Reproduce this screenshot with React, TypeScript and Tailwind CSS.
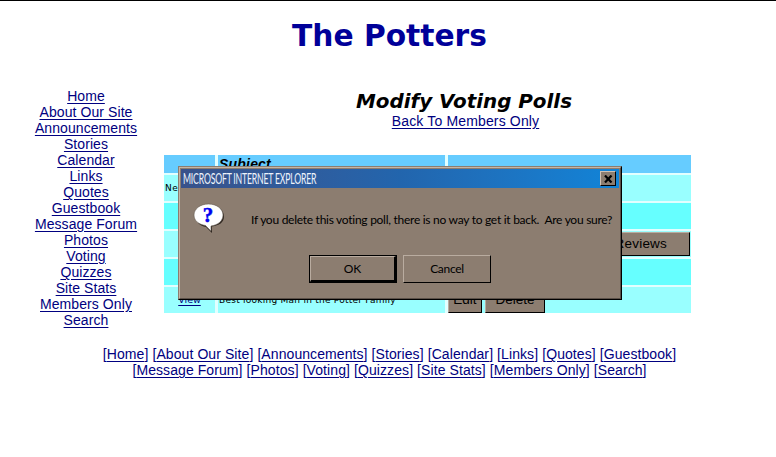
import React from "react";

const links = [
  "Home",
  "About Our Site",
  "Announcements",
  "Stories",
  "Calendar",
  "Links",
  "Quotes",
  "Guestbook",
  "Message Forum",
  "Photos",
  "Voting",
  "Quizzes",
  "Site Stats",
  "Members Only",
  "Search",
];

const pageFont = "font-['Liberation_Sans',Arial,sans-serif] text-[14px] leading-[16px]";
const grayButton =
  "border border-t-[#b9aca0] border-l-[#b9aca0] border-r-black border-b-black bg-[#8c7d70] text-black";

function PageLink({ label }: { label: string }) {
  return (
    <a href="#" className="text-[#000080] underline underline-offset-2">
      {label}
    </a>
  );
}

function FooterRow({ items }: { items: string[] }) {
  return (
    <div className="flex justify-center gap-[4px]">
      {items.map((label) => (
        <span key={label} className="whitespace-nowrap">
          [<PageLink label={label} />]
        </span>
      ))}
    </div>
  );
}

function PollTable() {
  return (
    <div className="grid w-[527px] grid-cols-[51px_227px_243px] grid-rows-[18px_26px_26px_26px_26px_26px] gap-x-[3px] gap-y-[2px] bg-[#e2ffff] text-black">
      <div className="bg-[#66ccff]" />
      <div className="overflow-hidden bg-[#66ccff] pl-px text-[14px] leading-[18px] font-bold tracking-[0.2px] italic">Subject</div>
      <div className="bg-[#66ccff]" />

      <div className="bg-[#99ffff] pl-px font-['DejaVu_Sans',sans-serif] text-[9px] leading-[26px] tracking-[0.5px]">New</div>
      <div className="bg-[#99ffff]" />
      <div className="bg-[#99ffff]" />

      <div className="bg-[#66ffff]" />
      <div className="bg-[#66ffff]" />
      <div className="bg-[#66ffff]" />

      <div className="bg-[#99ffff]" />
      <div className="bg-[#99ffff]" />
      <div className="flex items-center justify-end bg-[#99ffff] pr-px">
        <button className={`${grayButton} h-[24px] w-[105px] pr-[22px] text-right text-[13.5px] tracking-[0.2px]`}>Reviews</button>
      </div>

      <div className="bg-[#66ffff]" />
      <div className="bg-[#66ffff]" />
      <div className="bg-[#66ffff]" />

      <div className="bg-[#99ffff] text-center font-['DejaVu_Sans',sans-serif] text-[9.5px] leading-[26px]">
        <PageLink label="View" />
      </div>
      <div className="bg-[#99ffff] pl-px font-['DejaVu_Sans',sans-serif] text-[9px] leading-[26px] tracking-[0.25px] whitespace-nowrap">
        Best looking Man in the Potter Family
      </div>
      <div className="flex items-center gap-[3px] bg-[#99ffff]">
        <button className={`${grayButton} h-[25px] w-[34px] text-[13.5px]`}>Edit</button>
        <button className={`${grayButton} h-[25px] w-[60px] text-[13.5px]`}>Delete</button>
      </div>
    </div>
  );
}

function ConfirmDialog() {
  return (
    <div className="absolute top-[165px] left-[178px] flex h-[134px] w-[444px] flex-col border border-t-[#8c7d70] border-r-black border-b-black border-l-[#8c7d70] bg-[#8c7d70] font-[Lato,sans-serif] text-black">
      <div className="flex grow flex-col border border-t-[#c4b5a6] border-r-[#5b5048] border-b-[#5b5048] border-l-[#c4b5a6] px-px pt-px">
        <div className="flex h-[19px] items-center justify-between bg-linear-to-r from-[#38528a] via-[#2265ad] to-[#1084d8] pr-[3px] pl-[2px]">
          <span className="w-[133px] origin-left scale-x-[0.58] text-[15px] leading-[19px] tracking-[-0.35px] whitespace-nowrap text-[#edf3fc]">
            MICROSOFT INTERNET EXPLORER
          </span>
          <button aria-label="Close" className="flex h-[15px] w-[16px] items-center justify-center border border-t-[#d0c2b5] border-r-black border-b-black border-l-[#d0c2b5] bg-[#8c7d70]">
            <svg width="9" height="8" viewBox="0 0 9 8">
              <path d="M1 .5l6.500 7M7.500 .5L1 7.500" fill="none" stroke="#000" strokeWidth="2.200" />
            </svg>
          </button>
        </div>
        <div className="flex h-[67px] pt-[14px] pl-[12px]">
          <svg width="32" height="34" viewBox="0 0 32 34" className="shrink-0">
            <path d="M16 3C25 3 31 8 31 14.500c0 6-5 9-12 10V31l-6-6C7 24 3 20 3 14.500 3 8 8 3 16 3z" fill="#302821" />
            <path d="M15.500 2C24 2 30 7 30 13c0 6-5 10-12 11v5l-5.500-5.500C6 22.500 1 19 1 13 1 7 7 2 15.500 2z" fill="#fff" stroke="#655a50" strokeWidth=".6" />
            <text x="15" y="20" textAnchor="middle" fontFamily="Liberation Serif, serif" fontWeight="bold" fontSize="21" fill="#0000ef" stroke="#0000ef" strokeWidth=".5">?</text>
          </svg>
          <p className="ml-[26px] pt-[10px] text-[12px] leading-[16px] tracking-[-0.27px] whitespace-pre">
            If you delete this voting poll, there is no way to get it back.{"  "}Are you sure?
          </p>
        </div>
        <div className="flex gap-[6px] pl-[128px]">
          <div className="border border-black">
            <button className={`${grayButton} h-[26px] w-[86px] border-r-2 border-b-2 text-[12px]`}>OK</button>
          </div>
          <button className={`${grayButton} h-[28px] w-[88px] text-[12px] tracking-[-0.3px]`}>Cancel</button>
        </div>
      </div>
    </div>
  );
}

export default function App() {
  return (
    <div className={`relative h-[457px] w-[776px] overflow-hidden border-t border-black bg-white ${pageFont}`}>
      <h1 className="h-[87px] pt-[15px] pl-[3px] text-center font-['DejaVu_Sans',sans-serif] text-[29.7px] leading-[40px] font-bold text-[#000099]">
        The Potters
      </h1>
      <div className="flex h-[258px]">
        <nav className="flex w-[164px] flex-col items-center pl-[8px] tracking-[0.08px]">
          {links.map((label) => (
            <PageLink key={label} label={label} />
          ))}
        </nav>
        <main className="w-[600px]">
          <div className="h-[67px] text-center">
            <h2 className="pt-[2px] font-['DejaVu_Sans',sans-serif] text-[19.9px] leading-[23px] font-bold italic">
              Modify Voting Polls
            </h2>
            <div className="pl-[3px] tracking-[0.15px]">
              <PageLink label="Back To Members Only" />
            </div>
          </div>
          <PollTable />
        </main>
      </div>
      <footer className="pl-[3px] tracking-[0.08px] text-[#000080]">
        <FooterRow items={links.slice(0, 8)} />
        <FooterRow items={links.slice(8)} />
      </footer>
      <ConfirmDialog />
    </div>
  );
}
